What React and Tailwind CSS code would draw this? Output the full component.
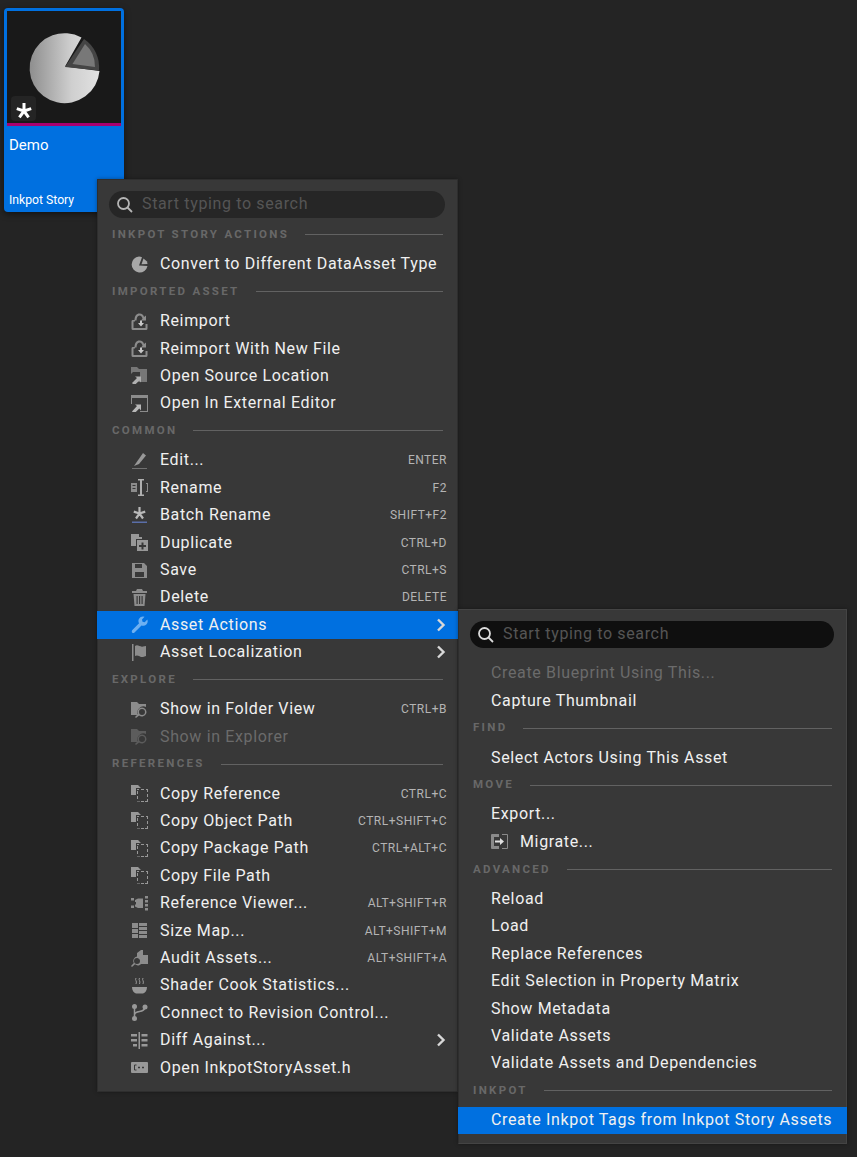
import React from "react";

const FONT = "font-['Roboto',_sans-serif]";

// little svg icons, all drawn on a 17x17 box
const Ico = ({ children, className = "text-[#989898]" }) => (
  <svg viewBox="0 0 17 17" className={`w-[17px] h-[17px] shrink-0 ${className}`} fill="currentColor">
    {children}
  </svg>
);

const Copies = () => (
  <Ico>
    <path d="M0 0h7l3 3H5v7H0z" />
    <path d="M6 4h2v1H6zM10 4h3v1h-3zM15 4h2v3h-1V5h-1zM6 6h1v3H6zM16 9h1v3h-1zM6 11h1v3H6zM16 14h1v3h-3v-1h2zM6 16h1v1h2v-0.5H6zM10 16h3v1h-3z" />
  </Ico>
);

const Reimport = () => (
  <Ico className="text-[#8c8c8c]">
    <path d="M1.500 7h2.500v1.500H2.500v6.500h12V11h2v4.500a1.500 1.500 0 0 1-1.500 1.500H2a1.500 1.500 0 0 1-1.500-1.500V8.500A1.500 1.500 0 0 1 1.500 7z" />
    <path d="M3.500 7.500C3.500 3 5.500 .5 8.500 .5c2.500 0 4 1.500 4.500 3.500L15 2.500v5h-5l1.500-1.800C11.300 4 10.200 2.500 8.500 2.500 6.500 2.500 5.500 5 5.500 7.500z" />
    <path d="M7 10h2V7.500h2V10h2l-3 3.500z" fill="#c8c8c8" />
  </Ico>
);

const FolderArrow = () => (
  <Ico className="text-[#777777]">
    <path d="M0 0h6l2 2h8v13H7l2-4V5H2L0 7z" />
    <path d="M1 16l5-5-2-1.500h6v6l-1.700-2-5 5z" fill="#b0b0b0" />
  </Ico>
);

const External = () => (
  <Ico className="text-[#8c8c8c]">
    <path d="M0 0h17v17H9v-1h7V3H1v6H0z" />
    <path d="M1 16.500l5-5.500-2-1.500h6v6l-1.700-2-5 5z" fill="#b8b8b8" />
  </Ico>
);

const Pencil = () => (
  <Ico>
    <path d="M12 1l3 2.500L8 12l-5 2z" />
    <path d="M1 16h15v1H1z" className="opacity-60" />
  </Ico>
);

const RenameIco = () => (
  <Ico className="text-[#8c8c8c]">
    <path d="M0 4h6v9H0zM1.500 6v1h3V6zM1.500 9v1h3V9zM15 4h2v9h-2v-1h1V5h-1z" fillRule="evenodd" />
    <path d="M7 0h6v1.500h-2v14h2V17H7v-1.500h2v-14H7z" fill="#b0b0b0" />
  </Ico>
);

const BatchIco = () => (
  <Ico className="text-[#b8b8b8]">
    <path d="M8.500 6.500V0M8.500 6.500l5.700-1.900M8.500 6.500l3.500 5M8.500 6.500l-3.500 5M8.500 6.500L2.800 4.600" stroke="currentColor" strokeWidth="2.200" fill="none" />
    <path d="M1 14.500h15V16H1z" fill="#5a6ea8" />
  </Ico>
);

const DuplicateIco = () => (
  <Ico>
    <path d="M0 0h8v3h3v2H5v7H0z" />
    <path d="M6 6h11v11H6zM10.500 8.500v2.500H8v2h2.500v2.500h2V13H15v-2h-2.500V8.500z" fillRule="evenodd" />
  </Ico>
);

const SaveIco = () => (
  <Ico className="text-[#8c8c8c]">
    <path d="M1 1h12l3 3v12H1zM4 2v4h7V2zM4 10v5h9v-5z" fillRule="evenodd" />
  </Ico>
);

const TrashIco = () => (
  <Ico className="text-[#8c8c8c]">
    <path d="M6 0h5l1 2h4v2H1V2h4z" />
    <path d="M2.500 5h12l-1 12h-10zM5.500 7v8h1.200V7zM8 7v8h1.200V7zM10.500 7v8h1.200V7z" fillRule="evenodd" />
  </Ico>
);

const WrenchIco = () => (
  <Ico className="text-[#6db0f2]">
    <path d="M12 0.500a4.500 4.500 0 0 1 1.500 .3L11 3.500l.5 2.200 2.200.5 2.600-2.600A4.500 4.500 0 0 1 10.500 9.500L3.500 16.500a1.500 1.500 0 0 1-2.700-1l.3-1.200 7-7A4.500 4.500 0 0 1 12 .5z" />
  </Ico>
);

const FlagIco = () => (
  <Ico className="text-[#8c8c8c]">
    <path d="M1 0h1.500v17H1zM4 2c3-2 5 1.500 8 .5l3-.5v10l-3 1c-3 .5-5-3-8-1z" />
  </Ico>
);

const FolderSearch = ({ className = "text-[#8c8c8c]" }) => (
  <Ico className={className}>
    <path d="M0 1h6l2 2h7v3a6 6 0 0 0-8 8H0z" />
    <path d="M11 6.500a4.500 4.500 0 1 1-2.900 8L5 17l-1-1 3-3A4.500 4.500 0 0 1 11 6.500zM11 8a3 3 0 1 0 0 6 3 3 0 0 0 0-6z" fillRule="evenodd" />
  </Ico>
);

const RefViewer = () => (
  <Ico className="text-[#8c8c8c]">
    <path d="M0 3h3v2.500H0zM0 10.500h3V13H0zM4 5l3-1.500h5V13H7l-3-1.500V9.500h1V7H4zM14 1h3v2.500h-3zM14 5h3v2.500h-3zM14 9h3v2.500h-3zM14 13h3v2.500h-3z" />
  </Ico>
);

const SizeMap = () => (
  <Ico className="text-[#8c8c8c]">
    <path d="M1 1h6v5H1zM8 1h8v3H8zM8 5h8v3H8zM1 7h6v4H1zM8 9h8v3H8zM8 13h8v3H8zM1 12h6v4H1z" />
  </Ico>
);

const AuditIco = () => (
  <Ico className="text-[#8c8c8c]">
    <path d="M6 3l4-3h2v5h5v9H10a5.500 5.500 0 0 0-4-6.500z" />
    <path d="M6 6.500a4.500 4.500 0 1 1-2 7.800L1 17l-1-1 2.800-3A4.500 4.500 0 0 1 6 6.500zM6 8a3 3 0 1 0 0 6 3 3 0 0 0 0-6z" fillRule="evenodd" />
  </Ico>
);

const BowlIco = () => (
  <Ico>
    <path d="M1 10h15c0 3.500-2 6-4 6.500H5C3 16 1 13.500 1 10z" />
    <path d="M5 1c-1.500 2 1.500 3 0 6M8.500 1c-1.500 2 1.500 3 0 6M12 1c-1.500 2 1.500 3 0 6" fill="none" stroke="currentColor" strokeWidth="1" />
  </Ico>
);

const BranchIco = () => (
  <Ico>
    <circle cx="3.500" cy="2.500" r="2.500" />
    <circle cx="14" cy="3" r="2.500" />
    <circle cx="3.500" cy="14.500" r="2.500" />
    <path d="M3.500 3v11M3.500 11c0-2.500 2-3 5-3.500 3-.5 5-1.500 5.500-4" fill="none" stroke="currentColor" strokeWidth="1.500" />
  </Ico>
);

const DiffIco = () => (
  <Ico>
    <path d="M0 2h6v2.500H0zM0 7h6v2.500H0zM2 12h4v2.500H2zM7.500 0h1.500v17H7.500zM10.500 2h6v2.500h-6zM10.500 7h6v2.500h-6zM10.500 12h6v2.500h-6z" />
  </Ico>
);

const CppIco = () => (
  <Ico>
    <path d="M1 3h15a1 1 0 0 1 1 1v9a1 1 0 0 1-1 1H1a1 1 0 0 1-1-1V4a1 1 0 0 1 1-1z" />
    <path d="M5.500 6H3.500v5h2M8 7.500v2M7 8.500h2M12 7.500v2M11 8.500h2" fill="none" stroke="#383838" strokeWidth="1" />
  </Ico>
);

const PieSmall = () => (
  <Ico className="text-[#a8a8a8]">
    <path d="M8 .5A8 8 0 1 0 16.500 10L8 9.500 11 1.200A8 8 0 0 0 8 .500z" />
    <path d="M12.500 2.500l3.500 3 .5 2.500-6 .3z" />
  </Ico>
);

const MigrateIco = () => (
  <Ico className="text-[#8a8a8a]">
    <path d="M1 1h7v3H3v9h5v3H1a1 1 0 0 1-1-1V2a1 1 0 0 1 1-1z" />
    <path d="M11 1h5a1 1 0 0 1 1 1v13a1 1 0 0 1-1 1h-5v-1h5V2h-5z" />
    <path d="M4 7.500h5V5l4 3.500-4 3.500V9.500H4z" fill="#e0e0e0" />
  </Ico>
);

const Chevron = () => (
  <svg viewBox="0 0 10 14" className="w-[10px] h-[14px] absolute right-[11px] top-1/2 -translate-y-1/2" fill="none" stroke="#d8d8d8" strokeWidth="2.400">
    <path d="M2 1.500L7.500 7 2 12.500" />
  </svg>
);

const SearchBox = ({ dark }) => (
  <div className={`h-[27px] rounded-full flex items-center pl-[7px] ${dark ? "bg-[#0f0f0f]" : "bg-[#262626]"}`}>
    <svg viewBox="0 0 18 18" className="w-[18px] h-[18px]" fill="none" stroke={dark ? "#dcdcdc" : "#b5b5b5"} strokeWidth="1.800">
      <circle cx="7.500" cy="7.500" r="5.500" />
      <path d="M11.500 11.500L16 16" />
    </svg>
    <span className="ml-[8px] pb-[2px] text-[16px] tracking-[0.64px] text-[#555555]">Start typing to search</span>
  </div>
);

const Header = ({ label }) => (
  <div className="h-[29.5px] pb-[2px] pl-[14px] pr-[14px] flex items-center gap-[16px]">
    <span className="text-[11.5px] font-bold tracking-[2.3px] text-[#686868] leading-none">{label}</span>
    <div className="flex-1 h-px bg-[#626262]" />
  </div>
);

const Row = ({ icon, label, shortcut, sub, active, disabled, pad = "pl-[33px]", gap = "gap-[12px]" }) => (
  <div className={`relative h-[27.43px] ${pad} pr-[10px] flex items-center ${gap} ${active ? "bg-[#0070e0] shadow-[1px_0_0_#0070e0,-1px_0_0_#0070e0]" : ""}`}>
    {icon}
    <span className={`text-[16px] tracking-[0.64px] whitespace-nowrap ${disabled ? "text-[#6b6b6b]" : "text-[#f0f0f0]"}`}>{label}</span>
    {shortcut && <span className="ml-auto text-[12px] tracking-[0.5px] text-[#b4b4b4]">{shortcut}</span>}
    {sub && <Chevron />}
  </div>
);

const SubRow = (props) => <Row pad="pl-[32px]" {...props} />;

export default function App() {
  return (
    <div className={`relative w-[857px] h-[1157px] bg-[#242424] overflow-hidden ${FONT}`}>
      {/* asset card */}
      <div className="absolute left-[4px] top-[8px] w-[120px] h-[204px] bg-[#0070e0] rounded-[4px] p-[3px] shadow-[0_2px_6px_rgba(0,0,0,0.5)]">
        <div className="relative h-[112px] bg-[#191919]">
          <svg viewBox="0 0 114 112" className="w-[114px] h-[112px]">
            <defs>
              <linearGradient id="pie" x1="0" x2="1" y1="0" y2="0">
                <stop offset="0" stopColor="#8e8e8e" />
                <stop offset="0.6" stopColor="#cfcfcf" />
                <stop offset="1" stopColor="#e2e2e2" />
              </linearGradient>
            </defs>
            <path d="M58 55.500L74.500 26.500A35 35 0 1 0 92.500 60z" fill="url(#pie)" />
            <path d="M58 56L77 28A34 34 0 0 1 92 59.500z" fill="#454545" />
            <path d="M65.500 53L78 33A30 30 0 0 1 88 56z" fill="#787878" />
          </svg>
          <div className="absolute left-[4px] bottom-[2px] w-[25px] h-[25px] rounded-[4px] bg-[#242424]" />
          <svg viewBox="0 0 16 16" className="absolute left-[9px] bottom-[4px] w-[16px] h-[16px]" fill="none" stroke="white" strokeWidth="3">
            <path d="M8 8V0M8 8l7.200-2.400M8 8l4.600 6.400M8 8l-4.600 6.400M8 8L.8 5.600" />
          </svg>
        </div>
        <div className="h-[3px] bg-[#a8006f]" />
        <div className="flex flex-col h-[83px] pl-[2px] text-white">
          <span className="mt-[9px] text-[15px] leading-[20px]">Demo</span>
          <span className="mt-auto mb-[1px] text-[12.200px] leading-[16px]">Inkpot Story</span>
        </div>
      </div>

      {/* context menu */}
      <div className="absolute left-[97px] top-[179px] w-[361px] h-[913px] bg-[#383838] border border-[#2e2e2e] shadow-[0_0_4px_rgba(0,0,0,0.35)]">
        <div className="pt-[11px] pl-[11px] pr-[12px] mb-[3px]">
          <SearchBox />
        </div>
        <Header label="INKPOT STORY ACTIONS" />
        <Row icon={<PieSmall />} label="Convert to Different DataAsset Type" />
        <Header label="IMPORTED ASSET" />
        <Row icon={<Reimport />} label="Reimport" />
        <Row icon={<Reimport />} label="Reimport With New File" />
        <Row icon={<FolderArrow />} label="Open Source Location" />
        <Row icon={<External />} label="Open In External Editor" />
        <Header label="COMMON" />
        <Row icon={<Pencil />} label="Edit..." shortcut="ENTER" />
        <Row icon={<RenameIco />} label="Rename" shortcut="F2" />
        <Row icon={<BatchIco />} label="Batch Rename" shortcut="SHIFT+F2" />
        <Row icon={<DuplicateIco />} label="Duplicate" shortcut="CTRL+D" />
        <Row icon={<SaveIco />} label="Save" shortcut="CTRL+S" />
        <Row icon={<TrashIco />} label="Delete" shortcut="DELETE" />
        <Row icon={<WrenchIco />} label="Asset Actions" active sub />
        <Row icon={<FlagIco />} label="Asset Localization" sub />
        <Header label="EXPLORE" />
        <Row icon={<FolderSearch />} label="Show in Folder View" shortcut="CTRL+B" />
        <Row icon={<FolderSearch className="text-[#5c5c5c]" />} label="Show in Explorer" disabled />
        <Header label="REFERENCES" />
        <Row icon={<Copies />} label="Copy Reference" shortcut="CTRL+C" />
        <Row icon={<Copies />} label="Copy Object Path" shortcut="CTRL+SHIFT+C" />
        <Row icon={<Copies />} label="Copy Package Path" shortcut="CTRL+ALT+C" />
        <Row icon={<Copies />} label="Copy File Path" />
        <Row icon={<RefViewer />} label="Reference Viewer..." shortcut="ALT+SHIFT+R" />
        <Row icon={<SizeMap />} label="Size Map..." shortcut="ALT+SHIFT+M" />
        <Row icon={<AuditIco />} label="Audit Assets..." shortcut="ALT+SHIFT+A" />
        <Row icon={<BowlIco />} label="Shader Cook Statistics..." />
        <Row icon={<BranchIco />} label="Connect to Revision Control..." />
        <Row icon={<DiffIco />} label="Diff Against..." sub />
        <Row icon={<CppIco />} label="Open InkpotStoryAsset.h" />
      </div>

      {/* asset actions submenu */}
      <div className="absolute left-[458px] top-[609px] w-[389px] h-[535px] bg-[#383838] border border-[#444444] border-l-[#2e2e2e] shadow-[0_0_4px_rgba(0,0,0,0.35)]">
        <div className="pt-[11px] pl-[11px] pr-[12px] mb-[11.500px]">
          <SearchBox dark />
        </div>
        <SubRow label="Create Blueprint Using This..." disabled />
        <SubRow label="Capture Thumbnail" />
        <Header label="FIND" />
        <SubRow label="Select Actors Using This Asset" />
        <Header label="MOVE" />
        <SubRow label="Export..." />
        <SubRow icon={<MigrateIco />} label="Migrate..." />
        <Header label="ADVANCED" />
        <SubRow label="Reload" />
        <SubRow label="Load" />
        <SubRow label="Replace References" />
        <SubRow label="Edit Selection in Property Matrix" />
        <SubRow label="Show Metadata" />
        <SubRow label="Validate Assets" />
        <SubRow label="Validate Assets and Dependencies" />
        <Header label="INKPOT" />
        <SubRow label="Create Inkpot Tags from Inkpot Story Assets" active />
      </div>
    </div>
  );
}
